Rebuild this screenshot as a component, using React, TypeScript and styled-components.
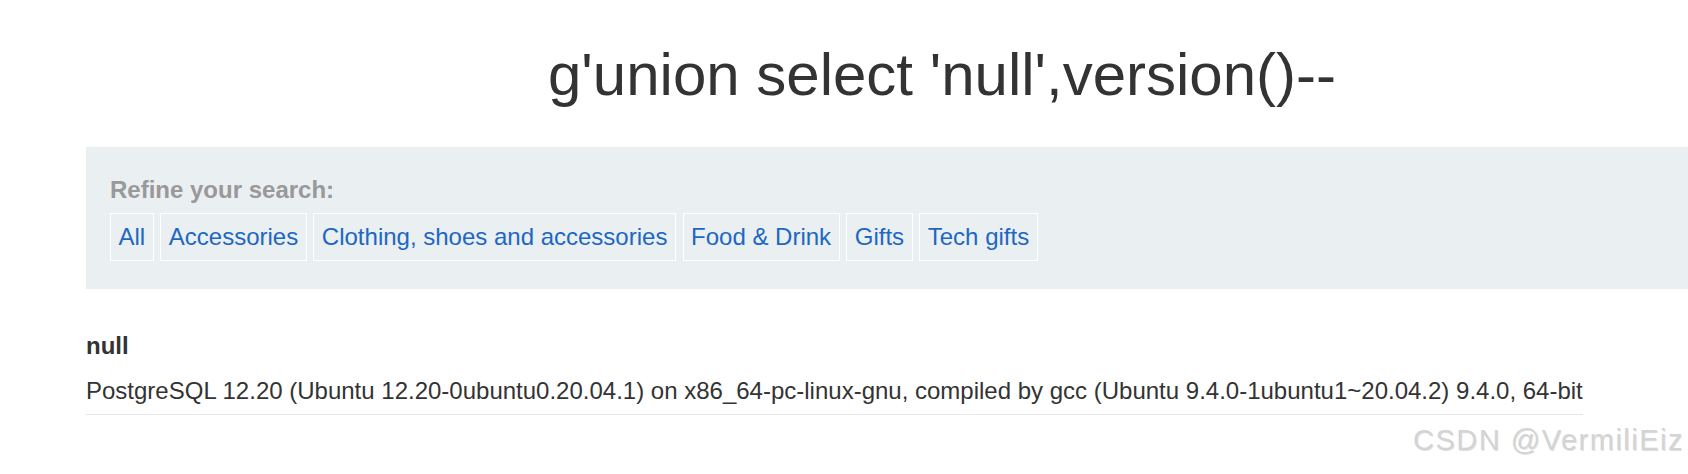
import React from "react";
import styled, { createGlobalStyle } from "styled-components";

const GlobalStyle = createGlobalStyle`
  html, body {
    margin: 0;
    padding: 0;
    overflow: hidden;
    background: #ffffff;
  }
  body {
    font-family: "Liberation Sans", Arial, Helvetica, sans-serif;
    color: #333333;
  }
`;

const Page = styled.div`
  position: relative;
  width: 1688px;
  height: 474px;
  overflow: hidden;
`;

const Main = styled.main`
  width: 1712px;
  margin-left: 86px;
  padding-top: 45px;
`;

const Title = styled.h1`
  margin: 0;
  font-size: 60px;
  line-height: 60px;
  font-weight: 400;
  text-align: center;
  color: #333333;
`;

const FilterPanel = styled.section`
  margin-top: 42px;
  padding: 29px 24px 28px;
  background: #eaeff2;
`;

const FilterLabel = styled.div`
  font-size: 24px;
  line-height: 28.8px;
  font-weight: 700;
  color: #999999;
  margin-bottom: 8.2px;
`;

const TagList = styled.nav`
  display: flex;
  gap: 6.67px;
`;

const Tag = styled.a`
  display: block;
  border: 1px solid #ffffff;
  padding: 7px 7.5px 8px;
  font-size: 24px;
  line-height: 31px;
  color: #2067c2;
  text-decoration: none;
  cursor: pointer;
`;

const ResultTable = styled.table`
  margin-top: 35px;
  border-collapse: collapse;
  border-spacing: 0;
`;

const HeadCell = styled.th`
  padding: 8px 0;
  text-align: left;
  font-size: 24px;
  line-height: 28.8px;
  font-weight: 700;
  color: #333333;
`;

const DataCell = styled.td`
  padding: 8.5px 0 8px;
  font-size: 24px;
  line-height: 28.8px;
  color: #333333;
  border-bottom: 1px solid #e6e6e6;
  white-space: nowrap;
`;

const Watermark = styled.div`
  position: absolute;
  right: 4px;
  top: 426px;
  font-size: 29px;
  line-height: 29px;
  letter-spacing: 1.5px;
  color: #d4d4d4;
  text-shadow: 1px 1px 0 rgba(0, 0, 0, 0.12);
  white-space: nowrap;
  pointer-events: none;
`;

const categories = [
  "All",
  "Accessories",
  "Clothing, shoes and accessories",
  "Food & Drink",
  "Gifts",
  "Tech gifts",
];

export default function App() {
  return (
    <>
      <GlobalStyle />
      <Page>
        <Main>
          <Title>g'union select 'null',version()--</Title>
          <FilterPanel>
            <FilterLabel>Refine your search:</FilterLabel>
            <TagList>
              {categories.map((c) => (
                <Tag key={c}>{c}</Tag>
              ))}
            </TagList>
          </FilterPanel>
          <ResultTable>
            <tbody>
              <tr>
                <HeadCell>null</HeadCell>
              </tr>
              <tr>
                <DataCell>
                  PostgreSQL 12.20 (Ubuntu 12.20-0ubuntu0.20.04.1) on x86_64-pc-linux-gnu, compiled by gcc (Ubuntu 9.4.0-1ubuntu1~20.04.2) 9.4.0, 64-bit
                </DataCell>
              </tr>
            </tbody>
          </ResultTable>
        </Main>
        <Watermark>CSDN @VermiliEiz</Watermark>
      </Page>
    </>
  );
}
